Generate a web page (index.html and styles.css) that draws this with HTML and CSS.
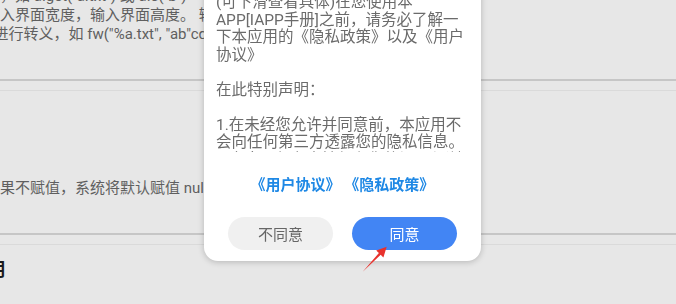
FILE: index.html
```html
<!DOCTYPE html>
<html lang="zh-CN">
<head>
    <meta charset="UTF-8">
    <meta name="viewport" content="width=device-width, initial-scale=1.0">
    <title>iApp手册</title>
    <link rel="stylesheet" href="styles.css">
</head>
<body>

<div class="page">
    <div class="item first">
        <div class="line">需要写文件后缀，如 a.get("a.txt") 或 a.s("b")</div>
        <div class="line">标题，文本，输入界面宽度，输入界面高度。 输入框</div>
        <div class="line">文本内容中" 需进行转义，如 fw("%a.txt", "ab"cd")</div>
    </div>
    <div class="item second">
        <div class="line">该参数可选，如果不赋值，系统将默认赋值 null</div>
    </div>
    <div class="item third">
        <div class="title">说明</div>
    </div>
</div>

<div class="mask">
    <div class="dialog">
        <div class="dialog-body">
            <p>(可下滑查看具体)在您使用本APP[IAPP手册]之前，请务必了解一下本应用的《隐私政策》以及《用户协议》</p>
            <p>在此特别声明：</p>
            <p>1.在未经您允许并同意前，本应用不会向任何第三方透露您的隐私信息。<br>2.本应用仅在本地保存您的设置与浏览记录。</p>
        </div>
        <div class="links">
            <a href="#">《用户协议》</a>
            <a href="#">《隐私政策》</a>
        </div>
        <div class="buttons">
            <button class="btn btn-cancel">不同意</button>
            <button class="btn btn-ok">同意</button>
        </div>
    </div>

    <!-- screenshot annotation -->
    <svg class="arrow" width="40" height="40" viewBox="0 0 40 40">
        <polygon points="6.7,31.7 24.7,14.7 27.4,17.4 30.7,6.7 20.2,10.5 22.9,13.1" fill="#e8322d"/>
    </svg>
</div>

</body>
</html>
```

FILE: styles.css
```css
body {
    margin: 0;
    background: #e7e7e7;
    font-family: Roboto, "Noto Sans CJK SC", sans-serif;
    overflow: hidden;
}
.page {
    color: #5f5f5f;
    font-size: 15px;
    line-height: 19px;
}
.item {
    white-space: nowrap;
    border-bottom: 2px solid #c6c6c6;
}
.item + .item {
    border-top: 1px solid #dadada;
    margin-top: 9px;
}
.item.first {
    margin-top: -13.5px;
    padding-bottom: 35.5px;
}
.item.second {
    padding-top: 87.5px;
    padding-bottom: 35.5px;
}
.item.third {
    padding-top: 13px;
    border-bottom: none;
    height: 60px;
}
.line {
    margin-left: -105px;
}
.title {
    margin-left: -31px;
    font-size: 18px;
    line-height: 24px;
    font-weight: bold;
    color: #1a1a1a;
}

.mask {
    position: fixed;
    left: 0;
    top: 0;
    right: 0;
    bottom: 0;
}
.dialog {
    position: absolute;
    left: 204px;
    top: -30px;
    width: 277px;
    background: #fff;
    border-radius: 14px;
    box-shadow: 0 1px 6px rgba(0, 0, 0, 0.22);
}
.dialog-body {
    box-sizing: border-box;
    height: 182px;
    overflow: hidden;
    padding: 24px 13px 0 12px;
    color: #6b6b6b;
    font-size: 15.5px;
    line-height: 17.5px;
}
.dialog-body p {
    margin: 0 0 17.5px;
}
.links {
    padding: 22px 0 21px;
    text-align: center;
    font-size: 15px;
    line-height: 22px;
    font-weight: bold;
}
.links a {
    color: #1e88e5;
    text-decoration: none;
}
.buttons {
    display: flex;
    gap: 19px;
    padding: 0 24px 11px;
}
.btn {
    flex: 1;
    height: 33px;
    border: none;
    border-radius: 17px;
    font-family: inherit;
    font-size: 15px;
}
.btn-cancel {
    background: #f0f0f0;
    color: #666;
}
.btn-ok {
    background: #4285f4;
    color: #fff;
}
.arrow {
    position: absolute;
    left: 356px;
    top: 240px;
}
```
